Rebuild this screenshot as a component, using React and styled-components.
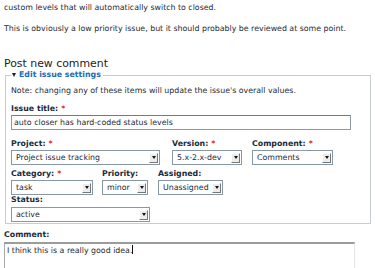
import React from 'react';
import styled, { createGlobalStyle } from 'styled-components';

const GlobalStyle = createGlobalStyle`
  body {
    margin: 0;
    background: #fff;
    font-family: "DejaVu Sans", Verdana, sans-serif;
    font-size: 7.85px;
    color: #1f2a36;
  }
`;

const Page = styled.div`
  width: 375px;
  height: 268px;
  overflow: hidden;
  padding: 2px 0 0 4px;
  box-sizing: border-box;
`;

const Para = styled.p`
  margin: 0 0 10px;
  line-height: 11px;
`;

const Heading = styled.h2`
  margin: 23px 0 0;
  font-family: "DejaVu Sans", sans-serif;
  font-weight: normal;
  font-size: 10.9px;
  line-height: 13px;
  color: #222;
`;

const Fieldset = styled.fieldset`
  margin: 0 4px 0 1px;
  padding: 5px 5px 1px 5px;
  border: 1px solid #c5cdd5;
`;

const Legend = styled.legend`
  padding: 0 2px 0 1px;
  font-weight: bold;
  color: #1a6cb0;
  display: flex;
  align-items: center;
  gap: 3px;
  line-height: 10px;
`;

const Triangle = styled.span`
  width: 0;
  height: 0;
  border-left: 2.5px solid transparent;
  border-right: 2.5px solid transparent;
  border-top: 4px solid #222;
`;

const Note = styled.div`
  line-height: 11px;
  margin-bottom: 8px;
`;

const Label = styled.div`
  font-weight: bold;
  color: #1b2b3c;
  line-height: 10px;
  margin-bottom: ${p => p.$mb ?? 1}px;
  white-space: nowrap;
`;

const Star = styled.span`
  color: #e3141c;
  margin-left: 3px;
`;

const TextInput = styled.div`
  width: ${p => p.$w}px;
  height: 15px;
  box-sizing: border-box;
  border: 1px solid #8c9aa6;
  border-top-color: #6e7c88;
  padding: 0 2px;
  line-height: 13px;
  margin-bottom: 9px;
`;

const Row = styled.div`
  display: flex;
  margin-bottom: ${p => p.$mb}px;
`;

const Field = styled.div`
  width: ${p => p.$w}px;
  margin-right: ${p => p.$mr || 0}px;
  display: flex;
  flex-direction: column;
`;

const SelectBox = styled.div`
  width: ${p => p.$w}px;
  height: 15px;
  box-sizing: border-box;
  border: 1px solid #8797a3;
  display: flex;
  align-items: center;
  justify-content: space-between;
  padding: 0 1px 0 4px;
  background: #fff;
  white-space: nowrap;
`;

const Arrow = styled.span`
  flex: none;
  width: 9px;
  height: 10px;
  box-sizing: border-box;
  background: #ececec;
  border-right: 1px solid #777;
  border-bottom: 1px solid #777;
  border-top: 1px solid #fff;
  border-left: 1px solid #fff;
  display: flex;
  align-items: center;
  justify-content: center;

  &::after {
    content: '';
    border-left: 2.5px solid transparent;
    border-right: 2.5px solid transparent;
    border-top: 3px solid #111;
  }
`;

const CommentLabel = styled(Label)`
  margin-top: 6px;
  margin-bottom: 2px;
`;

const TextArea = styled.div`
  width: 351px;
  height: 40px;
  box-sizing: border-box;
  border-top: 2px solid #9c9c9c;
  border-left: 1px solid #a8a8a8;
  border-right: 1px solid #e4e4e4;
  padding: 1px 2px;
  line-height: 11px;
`;

const Caret = styled.span`
  display: inline-block;
  width: 1px;
  height: 9px;
  background: #111;
  vertical-align: -1px;
`;

const Select = ({ w, children }) => (
  <SelectBox $w={w}>
    <span>{children}</span>
    <Arrow />
  </SelectBox>
);

export default function App() {
  return (
    <Page>
      <GlobalStyle />
      <Para>custom levels that will automatically switch to closed.</Para>
      <Para>This is obviously a low priority issue, but it should probably be reviewed at some point.</Para>
      <Heading>Post new comment</Heading>
      <Fieldset>
        <Legend><Triangle />Edit issue settings</Legend>
        <Note>Note: changing any of these items will update the issue's overall values.</Note>
        <Label>Issue title:<Star>*</Star></Label>
        <TextInput $w={340}>auto closer has hard-coded status levels</TextInput>
        <Row $mb={4}>
          <Field $w={149} $mr={12}>
            <Label>Project:<Star>*</Star></Label>
            <Select w={149}>Project issue tracking</Select>
          </Field>
          <Field $w={70} $mr={10}>
            <Label>Version:<Star>*</Star></Label>
            <Select w={70}>5.x-2.x-dev</Select>
          </Field>
          <Field $w={81}>
            <Label>Component:<Star>*</Star></Label>
            <Select w={81}>Comments</Select>
          </Field>
        </Row>
        <Row $mb={0}>
          <Field $w={82} $mr={9}>
            <Label>Category:<Star>*</Star></Label>
            <Select w={82}>task</Select>
          </Field>
          <Field $w={46} $mr={10}>
            <Label>Priority:</Label>
            <Select w={46}>minor</Select>
          </Field>
          <Field $w={65}>
            <Label>Assigned:</Label>
            <Select w={65}>Unassigned</Select>
          </Field>
        </Row>
        <Field $w={139}>
          <Label $mb={2}>Status:</Label>
          <Select w={139}>active</Select>
        </Field>
      </Fieldset>
      <CommentLabel>Comment:</CommentLabel>
      <TextArea>I think this is a really good idea.<Caret /></TextArea>
    </Page>
  );
}
